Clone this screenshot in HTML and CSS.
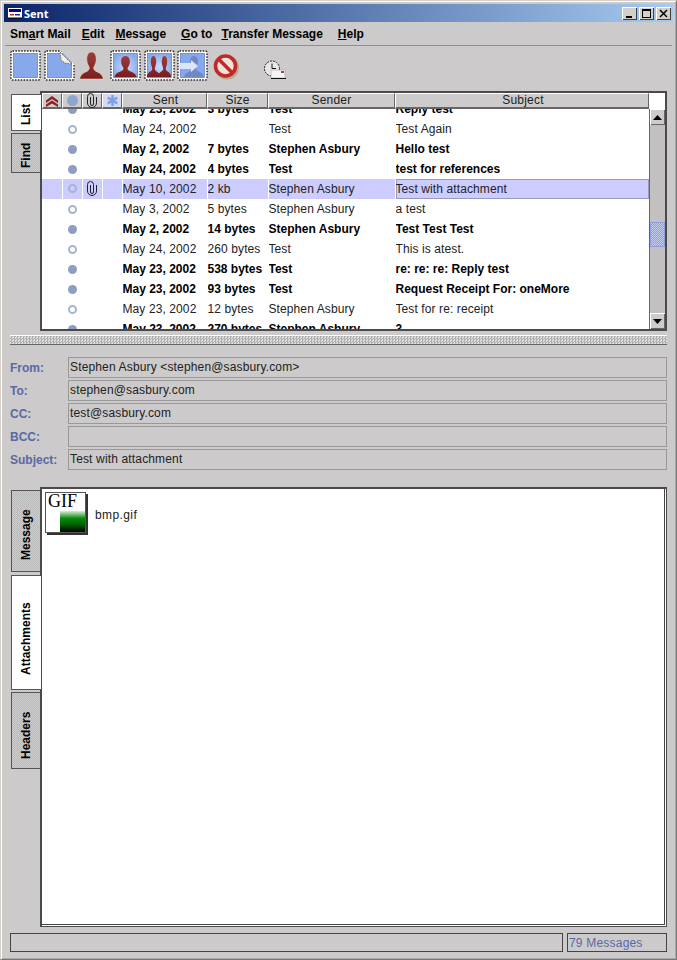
FILE: index.html
```html
<!DOCTYPE html>
<html lang="en">
<head>
    <meta charset="UTF-8">
    <meta name="viewport" content="width=device-width, initial-scale=1.0">
    <title>Sent</title>
    <link rel="stylesheet" href="styles.css">
</head>
<body>
    <svg class="defs" width="0" height="0">
        <defs>
            <linearGradient id="red" x1="0" y1="0" x2="0" y2="1">
                <stop offset="0" stop-color="#9c3c3c"/>
                <stop offset="1" stop-color="#7c1c1c"/>
            </linearGradient>
            <radialGradient id="sky" cx="50%" cy="55%" r="60%">
                <stop offset="0" stop-color="#c8dcf8"/>
                <stop offset="1" stop-color="#88a8ec"/>
            </radialGradient>
            <g id="stamp">
                <rect x="1" y="1" width="29" height="29" rx="1.500" fill="#fff" stroke="#222" stroke-width="1.400" stroke-dasharray="1.500 1.400"/>
                <rect x="3.500" y="3.500" width="24" height="24" fill="#88a8ec" stroke="#5e78c0" stroke-width="0.700"/>
            </g>
            <path id="person" d="M0 0c3.500 0 5 3 5 6 0 3-1.500 5-2.500 6.500-.5 1.500 0 2.500 2 3.500 4 1.500 7 2.500 8 6.500h-25c1-4 4-5 8-6.500 2-1 2.500-2 2-3.500C-3.500 11-5 9-5 6c0-3 1.500-6 5-6z"/>
            <path id="clip" d="M4.500 4v7a1.500 1.500 0 0 0 3 0V3.500a3 3 0 0 0-6 0v6.500a4.500 4.500 0 0 0 9 0V4" fill="none" stroke="#222" stroke-width="1"/>
        </defs>
    </svg>

    <div class="window">
        <div class="titlebar">
            <svg class="title-icon" width="14" height="11" viewBox="0 0 14 11">
                <rect width="14" height="11" fill="#fff"/>
                <rect x="1" y="1" width="12" height="3" fill="#000088"/>
                <rect x="2" y="6" width="4" height="1.500" fill="#cc2222"/>
                <rect x="7" y="6" width="5" height="1.500" fill="#2222aa"/>
                <rect y="9.500" width="14" height="1.500" fill="#111"/>
            </svg>
            <span class="title-text">Sent</span>
            <div class="win-buttons">
                <div class="win-btn"><svg width="15" height="13" viewBox="0 0 15 13"><rect x="4" y="9" width="6" height="2" fill="#000"/></svg></div>
                <div class="win-btn"><svg width="15" height="13" viewBox="0 0 15 13"><rect x="3.500" y="2.500" width="8" height="8" fill="none" stroke="#000"/><rect x="3" y="2" width="9" height="2" fill="#000"/></svg></div>
                <div class="win-btn"><svg width="15" height="13" viewBox="0 0 15 13"><path d="M4 3l7 7M11 3l-7 7" stroke="#000" stroke-width="1.500"/></svg></div>
            </div>
        </div>

        <div class="menubar">
            <span>Sm<u>a</u>rt Mail</span>
            <span><u>E</u>dit</span>
            <span><u>M</u>essage</span>
            <span class="menu-goto"><u>G</u>o to</span>
            <span class="menu-transfer"><u>T</u>ransfer Message</span>
            <span class="menu-help"><u>H</u>elp</span>
        </div>

        <div class="toolbar">
            <svg class="tool" width="31" height="31" viewBox="0 0 31 31"><use href="#stamp"/></svg>
            <svg class="tool tool-page" width="31" height="31" viewBox="0 0 31 31">
                <use href="#stamp"/>
                <path d="M16 0h15v15z" fill="#cdcbcb"/>
                <path d="M16 2l12 12-7-1-4-3z" fill="#f4f0d8" stroke="#222" stroke-width="0.500" stroke-dasharray="1.500 1"/>
            </svg>
            <svg class="tool tool-person" width="25" height="28" viewBox="0 0 25 28"><use href="#person" fill="url(#red)" stroke="#eee6b8" stroke-width="0.500" transform="translate(12.500 0) scale(.95 1.200)"/></svg>
            <svg class="tool tool-single" width="31" height="31" viewBox="0 0 31 31">
                <use href="#stamp"/>
                <rect x="4" y="4" width="23" height="23" fill="url(#sky)"/>
                <use href="#person" fill="url(#red)" transform="translate(15.500 6) scale(.88 .93)"/>
            </svg>
            <svg class="tool tool-group" width="31" height="31" viewBox="0 0 31 31">
                <use href="#stamp"/>
                <rect x="4" y="4" width="23" height="23" fill="url(#sky)"/>
                <use href="#person" fill="url(#red)" transform="translate(9.500 6) scale(.54 .93)"/>
                <use href="#person" fill="url(#red)" transform="translate(20.500 6) scale(.54 .93)"/>
            </svg>
            <svg class="tool tool-forward" width="31" height="31" viewBox="0 0 31 31">
                <use href="#stamp"/>
                <use href="#person" fill="#7088c8" transform="translate(17 6) scale(.8 .93)"/>
                <path d="M2 13h12V10l7 6-7 6v-3H2z" fill="#dce6f8"/>
            </svg>
            <svg class="tool tool-stop" width="27" height="26" viewBox="0 0 27 26">
                <circle cx="14" cy="13.500" r="12" fill="#a09a68" opacity=".6"/>
                <circle cx="12.500" cy="12" r="10" fill="#efe4dc" stroke="#c42828" stroke-width="3.600"/>
                <path d="M5.500 5l14 14" stroke="#c42828" stroke-width="3.600"/>
            </svg>
            <svg class="tool tool-send" width="23" height="20" viewBox="0 0 23 20">
                <circle cx="9" cy="8.500" r="7.500" fill="#e8e8e8" stroke="#222" stroke-dasharray="2 1"/>
                <path d="M9 3.500v5h4" fill="none" stroke="#111"/>
                <rect x="8" y="10" width="14" height="8" fill="#f4f4f4" stroke="#999" stroke-width="0.500"/>
                <rect x="8" y="18" width="15" height="1" fill="#111"/>
                <rect x="18" y="11" width="3" height="2" fill="#b04040"/>
            </svg>
        </div>

        <div class="list-pane">
            <div class="tabs tabs-list">
                <div class="tab tab-on tab-list">List</div>
                <div class="tab tab-find">Find</div>
            </div>
            <div class="panel">
                <div class="table-col">
                    <div class="thead">
                        <div class="th th-icon"><svg width="12" height="12" viewBox="0 0 12 12"><path d="M0 5.500L6 1l6 4.500v2.500L6 4 0 8zM0 9.500L6 5.500l6 4v2.500L6 8.500 0 12z" fill="#8c2020"/></svg></div>
                        <div class="th th-icon"><span class="dot dot-head"></span></div>
                        <div class="th th-icon"><svg width="12" height="15" viewBox="0 0 12 15"><use href="#clip"/></svg></div>
                        <div class="th th-icon th-star"><svg width="13" height="13" viewBox="0 0 13 13"><path d="M6.500 1v11M1.700 3.700l9.600 5.600M11.300 3.700L1.700 9.300" stroke="#7ca4ec" stroke-width="2.600"/></svg></div>
                        <div class="th th-sent">Sent</div>
                        <div class="th th-size">Size</div>
                        <div class="th th-sender">Sender</div>
                        <div class="th th-subject">Subject</div>
                    </div>
                    <div class="rows">
                        <table class="messages">
                            <colgroup>
                                <col class="c-icon"><col class="c-icon"><col class="c-icon"><col class="c-icon">
                                <col class="c-sent"><col class="c-size"><col class="c-sender"><col class="c-subject">
                            </colgroup>
                            <tr class="unread"><td></td><td><span class="dot"></span></td><td></td><td></td><td>May 23, 2002</td><td>3 bytes</td><td>Test</td><td>Reply test</td></tr>
                            <tr><td></td><td><span class="ring"></span></td><td></td><td></td><td>May 24, 2002</td><td></td><td>Test</td><td>Test Again</td></tr>
                            <tr class="unread"><td></td><td><span class="dot"></span></td><td></td><td></td><td>May 2, 2002</td><td>7 bytes</td><td>Stephen Asbury</td><td>Hello test</td></tr>
                            <tr class="unread"><td></td><td><span class="dot"></span></td><td></td><td></td><td>May 24, 2002</td><td>4 bytes</td><td>Test</td><td>test for references</td></tr>
                            <tr class="selected"><td></td><td><span class="ring"></span></td><td><svg class="clip" width="12" height="15" viewBox="0 0 12 15"><use href="#clip"/></svg></td><td></td><td>May 10, 2002</td><td>2 kb</td><td>Stephen Asbury</td><td class="focus">Test with attachment</td></tr>
                            <tr><td></td><td><span class="ring"></span></td><td></td><td></td><td>May 3, 2002</td><td>5 bytes</td><td>Stephen Asbury</td><td>a test</td></tr>
                            <tr class="unread"><td></td><td><span class="dot"></span></td><td></td><td></td><td>May 2, 2002</td><td>14 bytes</td><td>Stephen Asbury</td><td>Test Test Test</td></tr>
                            <tr><td></td><td><span class="ring"></span></td><td></td><td></td><td>May 24, 2002</td><td>260 bytes</td><td>Test</td><td>This is atest.</td></tr>
                            <tr class="unread"><td></td><td><span class="dot"></span></td><td></td><td></td><td>May 23, 2002</td><td>538 bytes</td><td>Test</td><td>re: re: re: Reply test</td></tr>
                            <tr class="unread"><td></td><td><span class="dot"></span></td><td></td><td></td><td>May 23, 2002</td><td>93 bytes</td><td>Test</td><td>Request Receipt For: oneMore</td></tr>
                            <tr><td></td><td><span class="ring"></span></td><td></td><td></td><td>May 23, 2002</td><td>12 bytes</td><td>Stephen Asbury</td><td>Test for re: receipt</td></tr>
                            <tr class="unread"><td></td><td><span class="dot"></span></td><td></td><td></td><td>May 23, 2002</td><td>270 bytes</td><td>Stephen Asbury</td><td>3</td></tr>
                        </table>
                    </div>
                </div>
                <div class="scroll-col">
                    <div class="scroll-corner"></div>
                    <div class="scrollbar">
                        <div class="arrow"><svg width="9" height="5" viewBox="0 0 9 5"><path d="M4.500 0L9 5H0z"/></svg></div>
                        <div class="track track-top"></div>
                        <div class="thumb"></div>
                        <div class="track"></div>
                        <div class="arrow"><svg width="9" height="5" viewBox="0 0 9 5"><path d="M0 0h9L4.500 5z"/></svg></div>
                    </div>
                </div>
            </div>
        </div>

        <div class="splitter"></div>

        <div class="fields">
            <label>From:</label><div class="field">Stephen Asbury &lt;stephen@sasbury.com&gt;</div>
            <label>To:</label><div class="field">stephen@sasbury.com</div>
            <label>CC:</label><div class="field">test@sasbury.com</div>
            <label>BCC:</label><div class="field"></div>
            <label>Subject:</label><div class="field">Test with attachment</div>
        </div>

        <div class="body-pane">
            <div class="tabs tabs-body">
                <div class="tab tab-message">Message</div>
                <div class="tab tab-on tab-attach">Attachments</div>
                <div class="tab tab-headers">Headers</div>
            </div>
            <div class="attach-panel">
                <div class="attachment">
                    <div class="gif-icon">
                        <span class="gif-label">GIF</span>
                        <div class="gif-swatch"></div>
                    </div>
                    <span class="file-name">bmp.gif</span>
                </div>
            </div>
        </div>

        <div class="statusbar">
            <div class="status status-main"></div>
            <div class="status status-count">79 Messages</div>
        </div>
    </div>
</body>
</html>
```

FILE: styles.css
```css
html, body {
    margin: 0;
    padding: 0;
}
body {
    font-family: "Liberation Sans", Arial, sans-serif;
    font-size: 12px;
    color: #111;
    background: #cdcbcb;
}
.defs {
    display: block;
    height: 0;
}
.window {
    width: 677px;
    height: 960px;
    box-sizing: border-box;
    padding: 4px;
    display: flex;
    flex-direction: column;
    border: 1px solid #777;
    border-top-color: #d4d0c8;
    border-left-color: #d4d0c8;
    background: repeating-conic-gradient(#cecccc 0 25%, #cac8c8 0 50%) 0 0 / 2px 2px;
    box-shadow: inset 1px 1px 0 #fff, inset -1px -1px 0 #aaa;
}

/* title bar */
.titlebar {
    height: 18px;
    flex: none;
    margin: -1px -1px 0 -1px;
    display: flex;
    align-items: center;
    padding: 0 2px 0 4px;
    background: linear-gradient(to right, #0a246a, #a6caf0);
    color: #fff;
    font-family: "Open Sans", sans-serif;
    font-weight: 700;
    font-size: 11px;
}
.title-icon {
    margin-right: 2px;
}
.win-buttons {
    margin-left: auto;
    display: flex;
    gap: 2px;
}
.win-btn {
    width: 15px;
    height: 13px;
    background: #d4d0c8;
    box-shadow: inset 1px 1px 0 #fff, inset -1px -1px 0 #404040;
}
.win-btn svg {
    display: block;
}

/* menu */
.menubar {
    height: 24px;
    flex: none;
    display: flex;
    align-items: center;
    gap: 11px;
    padding: 1px 0 0 5px;
    box-sizing: border-box;
    border-bottom: 1px solid #8f8f8f;
    font-weight: 700;
    font-size: 12px;
    color: #000;
}
.menu-goto {
    margin-left: 4px;
}
.menu-transfer {
    margin-left: -2px;
}
.menu-help {
    margin-left: 4px;
}

/* toolbar */
.toolbar {
    height: 45px;
    flex: none;
    box-sizing: border-box;
    padding: 4px 0 0 5px;
    display: flex;
    align-items: flex-start;
}
.tool {
    display: block;
    flex: none;
}
.tool-page { margin-left: 3px; }
.tool-person { margin: 2px 0 0 4px; }
.tool-single { margin-left: 6px; }
.tool-group { margin-left: 3px; }
.tool-forward { margin-left: 2px; }
.tool-stop { margin: 4px 0 0 5px; }
.tool-send { margin: 10px 0 0 23px; }

/* list */
.list-pane {
    height: 240px;
    flex: none;
    display: flex;
    margin: 0 5px 0 6px;
}
.tabs {
    width: 29px;
    flex: none;
    display: flex;
    flex-direction: column;
}
.tabs-list {
    padding-top: 3px;
    gap: 2px;
}
.tab {
    box-sizing: border-box;
    width: 29px;
    writing-mode: vertical-rl;
    transform: rotate(180deg);
    text-align: center;
    font-weight: 700;
    font-size: 12px;
    line-height: 28px;
    color: #000;
    border: 1px solid #555;
    border-left-width: 0;
    background: repeating-conic-gradient(#b9b8b8 0 25%, #cfcece 0 50%) 0 0 / 2px 2px;
}
.tab-on {
    background: #fff;
    width: 30px;
}
.tab-list { height: 37px; padding-bottom: 3px; }
.tab-find { height: 40px; padding-bottom: 4px; }
.panel {
    flex: 1;
    display: flex;
    box-sizing: border-box;
    border: 2px solid #4a4a4a;
    background: #fff;
    min-width: 0;
}
.table-col {
    width: 607px;
    flex: none;
    display: flex;
    flex-direction: column;
    min-height: 0;
}
.thead {
    height: 16px;
    flex: none;
    display: flex;
}
.th {
    box-sizing: border-box;
    height: 16px;
    line-height: 15px;
    text-align: center;
    color: #222;
    font-size: 12px;
    letter-spacing: .2px;
    background: #cdcbcb;
    border: 1px solid #fff;
    border-right-color: #666;
    border-bottom: 2px solid #666;
    display: flex;
    align-items: center;
    justify-content: center;
}
.th-icon { width: 20px; }
.th-star { background: #d8d8ee; }
.th-sent { width: 85px; padding-left: 2px; }
.th-size { width: 61px; }
.th-sender { width: 127px; }
.th-subject { width: 254px; padding-left: 2px; }
.rows {
    flex: 1;
    overflow: hidden;
    min-height: 0;
}
.messages {
    border-collapse: collapse;
    table-layout: fixed;
    width: 607px;
    margin-top: -10px;
}
.c-icon { width: 20px; }
.c-sent { width: 85px; }
.c-size { width: 61px; }
.c-sender { width: 127px; }
.c-subject { width: 254px; }
.messages td {
    height: 20px;
    padding: 0;
    white-space: nowrap;
    overflow: hidden;
    font-size: 12px;
    letter-spacing: .1px;
    color: #222;
    border-right: 1px solid transparent;
    box-sizing: border-box;
    text-align: left;
}
.unread td {
    font-weight: 700;
    color: #000;
    letter-spacing: 0;
}
.selected td {
    background: #ccccff;
    border: 1px solid #fff;
    border-width: 0 1px 1px 0;
}
.selected td.focus {
    box-shadow: inset 0 0 0 1px #9999bb;
}
.dot, .ring {
    display: block;
    width: 9px;
    height: 9px;
    margin-left: 5px;
    border-radius: 50%;
    box-sizing: border-box;
}
.dot {
    background: #8c9fbe;
}
.dot-head {
    width: 11px;
    height: 11px;
    margin-left: 0;
    background: #8fa6cc;
}
.ring {
    background: #fff;
    border: 2px solid #a4b5d0;
}
.selected .ring {
    background: #ccccff;
}
.clip {
    display: block;
    margin: 0 auto;
}

/* scrollbar */
.scroll-col {
    flex: 1;
    display: flex;
    flex-direction: column;
    min-width: 0;
}
.scroll-corner {
    height: 16px;
    flex: none;
}
.scrollbar {
    flex: 1;
    display: flex;
    flex-direction: column;
    background: #cdcbcb;
    border-left: 1px solid #666;
}
.arrow {
    height: 16px;
    flex: none;
    display: flex;
    align-items: center;
    justify-content: center;
    background: #cdcbcb;
    box-shadow: inset 1px 1px 0 #fff, inset -1px -1px 0 #666;
}
.track {
    flex: 1;
    background: #c2c0c0;
}
.track-top {
    flex: none;
    height: 97px;
}
.thumb {
    height: 25px;
    flex: none;
    background: repeating-conic-gradient(#8f9edc 0 25%, #c4ccec 0 50%) 0 0 / 2px 2px;
    box-shadow: inset 0 0 0 1px #8f9fdd;
}

/* splitter */
.splitter {
    height: 8px;
    flex: none;
    margin: 4px 5px 0 5px;
    border-top: 1px solid #fff;
    border-bottom: 1px solid #666;
    background: repeating-conic-gradient(#b0b0b0 0 25%, #dedede 0 50%) 0 0 / 3px 3px;
}

/* header fields */
.fields {
    flex: none;
    margin: 12px 5px 0 5px;
    display: grid;
    grid-template-columns: 58px 1fr;
    grid-auto-rows: 21px;
    row-gap: 2px;
    align-items: center;
}
.fields label {
    font-weight: 700;
    color: #5a68a6;
}
.field {
    box-sizing: border-box;
    height: 21px;
    line-height: 19px;
    padding-left: 1px;
    border: 1px solid #999;
    color: #222;
    letter-spacing: .15px;
}

/* attachments */
.body-pane {
    flex: none;
    height: 440px;
    margin: 17px 5px 0 6px;
    display: flex;
}
.tabs-body {
    padding-top: 3px;
}
.tab-message { height: 82px; padding-bottom: 8px; }
.tab-attach { height: 115px; margin-top: 3px; padding-bottom: 12px; }
.tab-headers { height: 77px; margin-top: 2px; padding-bottom: 9px; }
.attach-panel {
    flex: 1;
    box-sizing: border-box;
    background: #fff;
    border: 2px solid #4a4a4a;
    border-width: 2px 1px 1px 2px;
    box-shadow: inset -1px -1px 0 #fff, inset -2px -2px 0 #444;
    padding: 3px 0 0 3px;
}
.attachment {
    display: flex;
    align-items: flex-start;
    gap: 9px;
}
.gif-icon {
    box-sizing: border-box;
    width: 41px;
    height: 41px;
    background: #fff;
    border: 1px solid #555;
    box-shadow: 2px 2px 0 #333;
    display: flex;
    flex-direction: column;
}
.gif-label {
    font-family: "Liberation Serif", serif;
    font-size: 18px;
    line-height: 16px;
    padding-left: 2px;
    color: #000;
}
.gif-swatch {
    width: 25px;
    height: 21px;
    margin-left: auto;
    margin-top: 2px;
    background: linear-gradient(#d8ecd8, #0a8a0a 35%, #006000 65%, #000);
}
.file-name {
    margin-top: 16px;
    color: #222;
    letter-spacing: .4px;
}

/* status */
.statusbar {
    flex: none;
    margin: 6px 5px 0 5px;
    height: 19px;
    display: flex;
    gap: 4px;
}
.status {
    box-sizing: border-box;
    height: 19px;
    border: 1px solid #444;
}
.status-main {
    width: 553px;
}
.status-count {
    flex: 1;
    line-height: 18px;
    padding-left: 1px;
    color: #5a68a6;
    letter-spacing: .2px;
}
```
